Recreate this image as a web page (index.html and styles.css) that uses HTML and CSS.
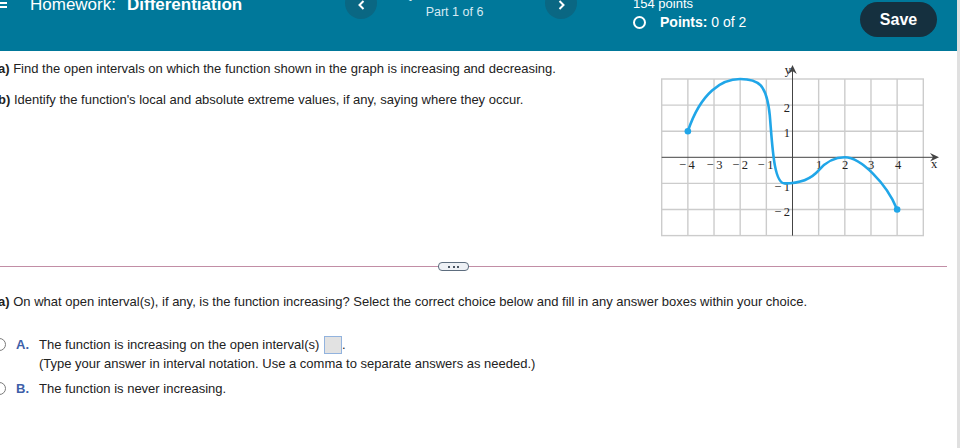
FILE: index.html
```html
<!DOCTYPE html>
<html>
<head>
<meta charset="utf-8">
<link rel="stylesheet" href="styles.css">
</head>
<body>
<div class="page">
  <header class="topbar">
    <div class="menu"><span></span><span></span><span></span></div>
    <div class="title">Homework:<b class="title-name">Differentiation</b></div>
    <button class="nav"><svg width="7" height="10" viewBox="0 0 7 10"><polyline points="5.5,1 1.5,5 5.5,9" fill="none" stroke="#fff" stroke-width="2"/></svg></button>
    <div class="part"><div class="qnum">Question 7, 4.3.13</div><div>Part 1 of 6</div></div>
    <button class="nav"><svg width="7" height="10" viewBox="0 0 7 10"><polyline points="1.5,1 5.5,5 1.5,9" fill="none" stroke="#fff" stroke-width="2"/></svg></button>
    <div></div>
    <div class="score">
      <div class="score-total">154 points</div>
      <div class="pts"><span class="ring"></span><b>Points:</b>&nbsp;0 of 2</div>
    </div>
    <button class="save">Save</button>
  </header>

  <main class="main">
    <section class="top-row">
      <div class="prompt">
        <p class="line-a"><b>a)</b> Find the open intervals on which the function shown in the graph is increasing and decreasing.</p>
        <p class="line-b"><b>b)</b> Identify the function's local and absolute extreme values, if any, saying where they occur.</p>
      </div>
      <svg class="graph" width="300" height="190" viewBox="0 0 300 190">
        <g stroke="#cccccc" stroke-width="1.4" fill="none">
          <rect x="11.7" y="24" width="261.6" height="156.6"/>
          <line x1="37.86" y1="24" x2="37.86" y2="180.6"/>
          <line x1="64.02" y1="24" x2="64.02" y2="180.6"/>
          <line x1="90.18" y1="24" x2="90.18" y2="180.6"/>
          <line x1="116.34" y1="24" x2="116.34" y2="180.6"/>
          <line x1="168.66" y1="24" x2="168.66" y2="180.6"/>
          <line x1="194.82" y1="24" x2="194.82" y2="180.6"/>
          <line x1="220.98" y1="24" x2="220.98" y2="180.6"/>
          <line x1="247.14" y1="24" x2="247.14" y2="180.6"/>
          <line x1="11.7" y1="50.1" x2="273.3" y2="50.1"/>
          <line x1="11.7" y1="76.2" x2="273.3" y2="76.2"/>
          <line x1="11.7" y1="128.4" x2="273.3" y2="128.4"/>
          <line x1="11.7" y1="154.5" x2="273.3" y2="154.5"/>
        </g>
        <g stroke="#444" stroke-width="1" fill="none">
          <line x1="11.7" y1="102.3" x2="284" y2="102.3"/>
          <line x1="142.5" y1="180.6" x2="142.5" y2="14"/>
        </g>
        <path d="M280 98 L289 102.3 L280 106.6 L283 102.3 Z" fill="#444"/>
        <path d="M138.2 19 L142.5 10 L146.8 19 L142.5 16 Z" fill="#444"/>
        <g class="ticks" font-size="12.5" fill="#222" text-anchor="middle">
          <text x="36.9" y="114">−&#8201;4</text>
          <text x="64.5" y="114">−&#8201;3</text>
          <text x="90.2" y="114">−&#8201;2</text>
          <text x="115.5" y="114">−&#8201;1</text>
          <text x="169" y="114">1</text>
          <text x="195" y="114">2</text>
          <text x="221" y="114">3</text>
          <text x="248" y="114">4</text>
        </g>
        <g class="ticks" font-size="12.5" fill="#222" text-anchor="end">
          <text x="140" y="57">2</text>
          <text x="140" y="82">1</text>
          <text x="140" y="136">−&#8201;1</text>
          <text x="140" y="161">−&#8201;2</text>
          <text x="141" y="19">y</text>
        </g>
        <text class="ticks" x="281" y="113" font-size="12.5" fill="#222">x</text>
        <path d="M37.86 76.2 C50.94 37.05 71.87 24 90.18 24 C108.49 24 116.65 29.22 119.76 60.15 C122.36 90.29 123.66 128.4 134.65 128.4 C150.35 128.4 160.81 124.49 168.66 115.35 C176.51 106.22 184.36 102.3 194.82 102.3 C210.52 102.3 236.68 128.4 247.14 154.5" fill="none" stroke="#20a6e8" stroke-width="2.6"/>
        <circle cx="37.86" cy="76.2" r="3.3" fill="#20a6e8"/>
        <circle cx="247.14" cy="154.5" r="3.3" fill="#20a6e8"/>
      </svg>
    </section>

    <div class="divider">
      <span class="rule rule-left"></span>
      <button class="more"><i></i><i></i><i></i></button>
      <span class="rule rule-right"></span>
    </div>

    <p class="question"><b>a)</b> On what open interval(s), if any, is the function increasing? Select the correct choice below and fill in any answer boxes within your choice.</p>

    <div class="choices">
      <div class="choice">
        <span class="radio"></span>
        <span class="letter">A.</span>
        <div class="choice-body">
          <div>The function is increasing on the open interval(s) <span class="answer-box"></span>.</div>
          <div>(Type your answer in interval notation. Use a comma to separate answers as needed.)</div>
        </div>
      </div>
      <div class="choice">
        <span class="radio"></span>
        <span class="letter">B.</span>
        <div class="choice-body">
          <div>The function is never increasing.</div>
        </div>
      </div>
    </div>
  </main>
</div>
</body>
</html>
```

FILE: styles.css
```css
html, body {
  margin: 0;
  padding: 0;
  background: #fff;
  overflow: hidden;
}

body {
  font-family: "Liberation Sans", Arial, sans-serif;
  color: #222;
}

.page {
  width: 957px;
  height: 448px;
  border-right: 3px solid #e0e0e0;
  overflow: hidden;
}

/* ---------- top bar ---------- */
.topbar {
  height: 51px;
  background: #00789a;
  color: #fff;
  display: grid;
  grid-template-columns: 30px 315px 32px 168px 32px 56px 227px 77px;
  align-items: start;
  overflow: hidden;
}

.menu {
  display: flex;
  flex-direction: column;
  gap: 2.5px;
  width: 7px;
  margin-top: -2px;
}

.menu span {
  display: block;
  height: 1.5px;
  background: #fff;
}

.title {
  font-size: 17px;
  line-height: 20px;
  margin-top: -5px;
  white-space: nowrap;
}

.title-name {
  margin-left: 11px;
}

.nav {
  width: 32px;
  height: 32px;
  margin-top: -13px;
  padding: 0;
  border: 0;
  border-radius: 50%;
  background: #0a6783;
  display: flex;
  align-items: center;
  justify-content: center;
  padding-top: 3px;
}

.part {
  text-align: center;
  font-size: 12.5px;
  line-height: 15px;
  margin-top: -13px;
  padding-right: 13px;
  color: #d6eaf2;
  white-space: nowrap;
}

.qnum {
  margin-bottom: 3px;
}

.score {
  margin-top: -4px;
  white-space: nowrap;
}

.score-total {
  font-size: 13px;
  line-height: 15px;
}

.pts {
  margin-top: 3px;
  display: flex;
  align-items: center;
  font-size: 14px;
  line-height: 16px;
}

.ring {
  width: 9px;
  height: 9px;
  border: 2px solid #fff;
  border-radius: 50%;
  margin-right: 14px;
}

.save {
  width: 77px;
  height: 35px;
  margin-top: 2px;
  padding: 0;
  border: 0;
  border-radius: 18px;
  background: #15303f;
  color: #fff;
  font-family: "Liberation Sans", Arial, sans-serif;
  font-weight: bold;
  font-size: 16px;
}

/* ---------- content ---------- */
.main {
  font-size: 13px;
}

.top-row {
  display: flex;
  align-items: flex-start;
  height: 211px;
}

.prompt {
  margin-left: -2px;
  padding-top: 9px;
  line-height: 18px;
}

.prompt p {
  margin: 0;
}

.prompt .line-b {
  margin-top: 13px;
}

.graph {
  margin-left: auto;
  margin-top: 4px;
  margin-right: 7px;
  flex: none;
}

.ticks {
  font-family: "Liberation Serif", "Times New Roman", serif;
}

.divider {
  display: flex;
  align-items: center;
  width: 947px;
  height: 9px;
}

.rule {
  height: 1px;
  background: #c28ea6;
}

.rule-left {
  width: 438px;
}

.rule-right {
  flex: 1;
}

.more {
  width: 31px;
  height: 9px;
  padding: 0;
  box-sizing: border-box;
  border: 1px solid #5d6d7e;
  border-radius: 4px;
  background: #eef1f5;
  display: flex;
  align-items: center;
  justify-content: center;
  gap: 2.5px;
}

.more i {
  display: block;
  width: 2px;
  height: 2px;
  background: #4a5562;
}

.question {
  margin: 22px 0 0 -2px;
  line-height: 18px;
}

.choices {
  margin-top: 24px;
  display: flex;
  flex-direction: column;
  gap: 6px;
  line-height: 19px;
}

.choice {
  display: flex;
  align-items: flex-start;
}

.radio {
  flex: none;
  width: 11px;
  height: 11px;
  border: 1px solid #7a7a7a;
  border-radius: 50%;
  margin-left: -7px;
  margin-top: 3px;
}

.letter {
  flex: none;
  width: 23px;
  margin-left: 10px;
  color: #3e5fa9;
  font-weight: bold;
}

.answer-box {
  display: inline-block;
  width: 16px;
  height: 16px;
  border: 1px solid #92b3de;
  background: #e2e2e2;
  vertical-align: -5px;
  margin-left: 1px;
}
```
